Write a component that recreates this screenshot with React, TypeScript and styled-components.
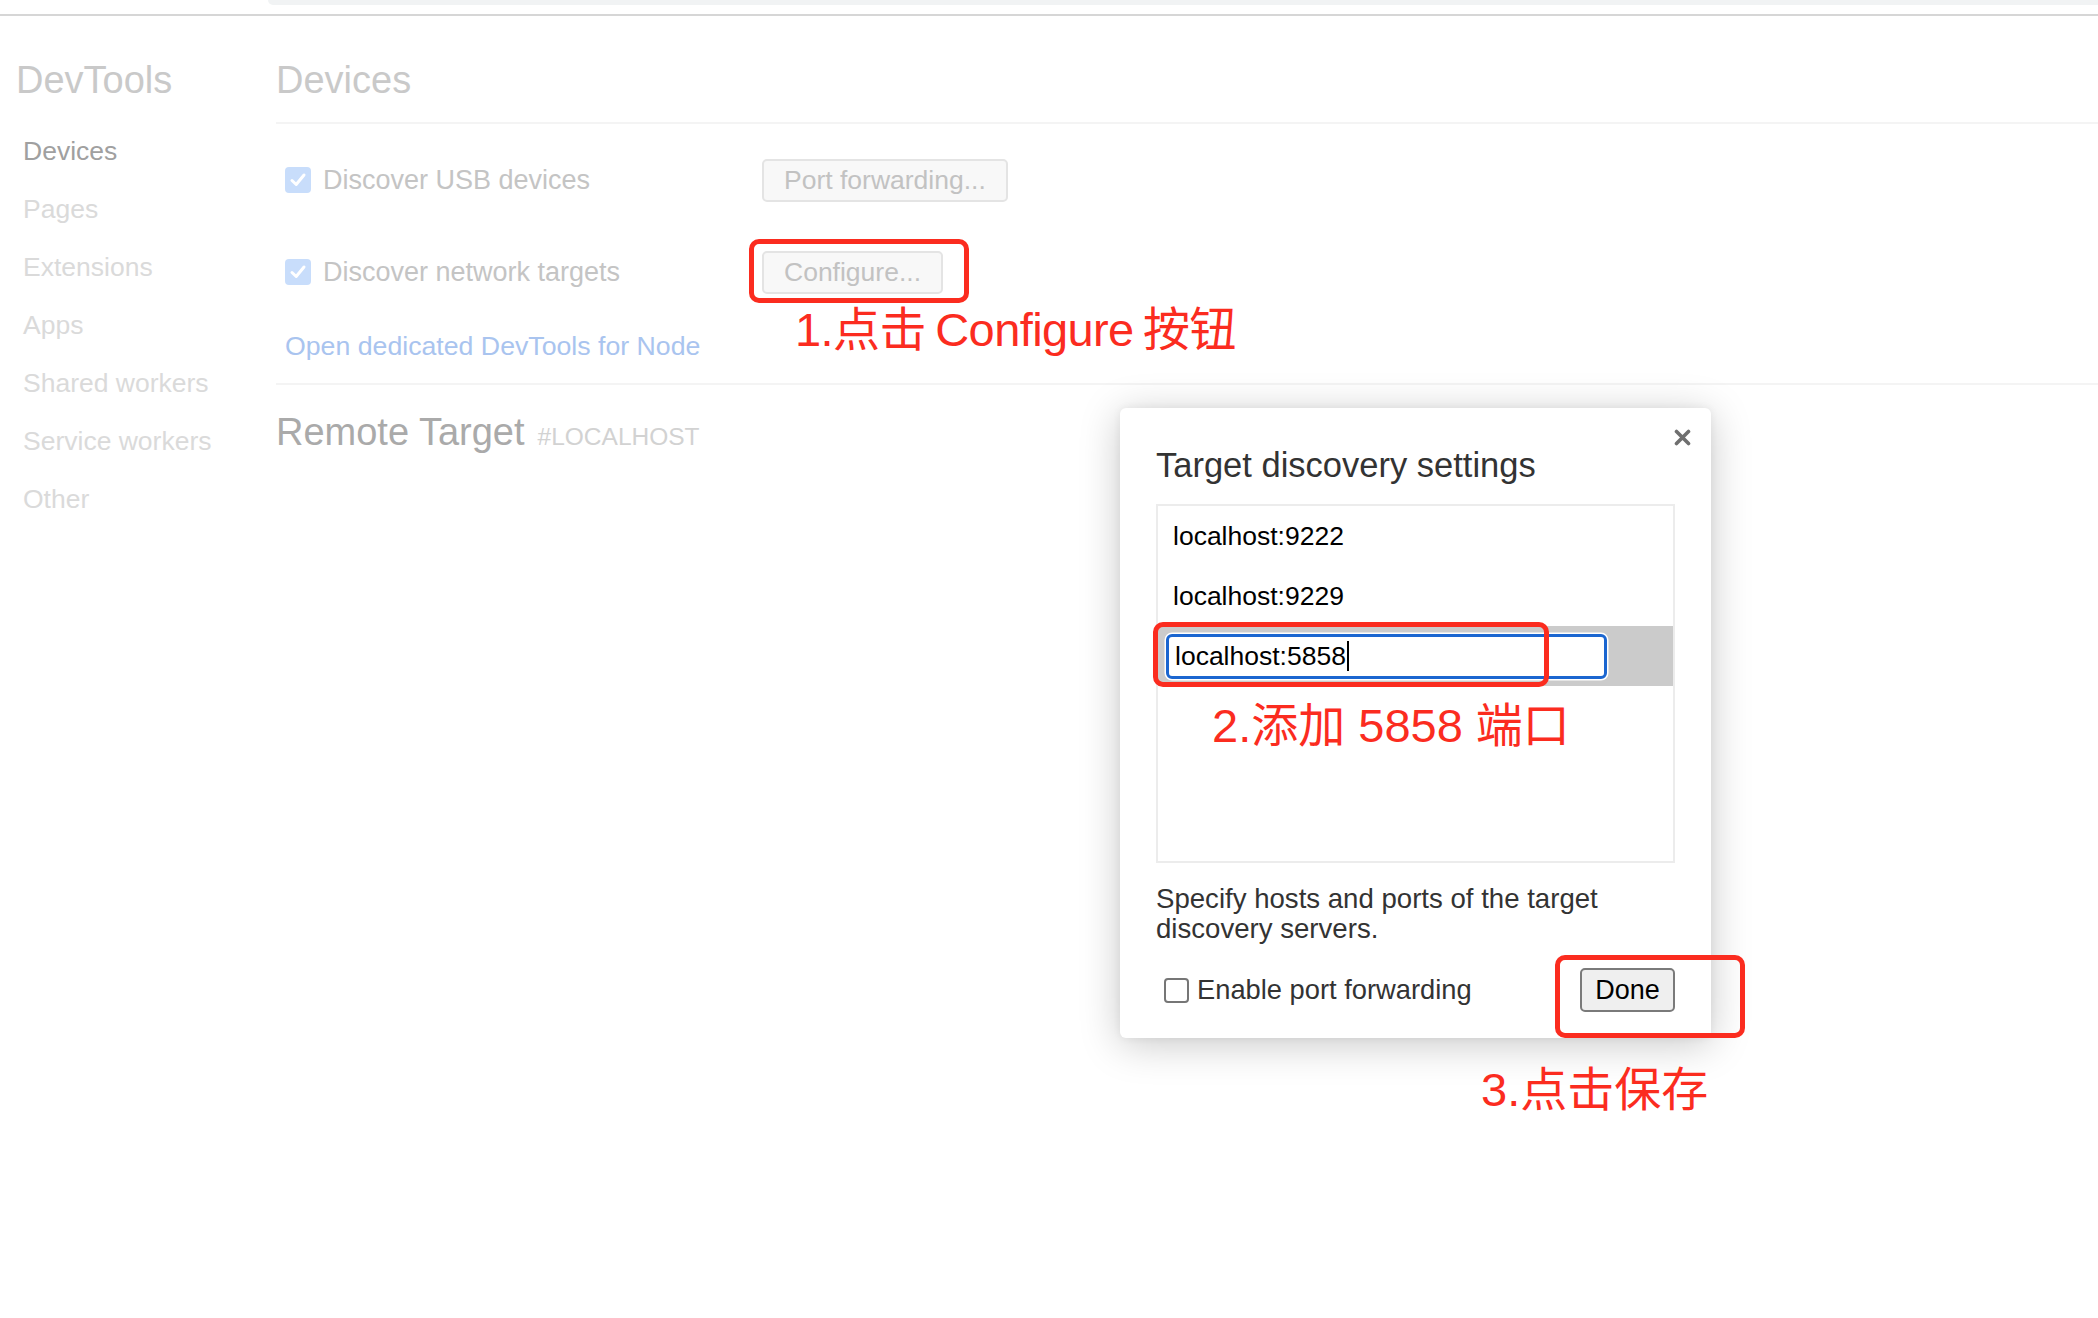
import React from "react";
import styled, { createGlobalStyle } from "styled-components";

const Global = createGlobalStyle`
  html, body { margin: 0; padding: 0; background: #ffffff; }
  body { font-family: "Liberation Sans", Arial, sans-serif; }
  * { box-sizing: border-box; }
`;

const Page = styled.div`
  position: relative;
  width: 2098px;
  height: 1318px;
  overflow: hidden;
  background: #ffffff;
`;

const TopStrip = styled.div`
  height: 16px;
  border-bottom: 2px solid #d6d6d6;
`;

const TabShelf = styled.div`
  margin-left: 268px;
  height: 5px;
  background: #f1f3f4;
  border-bottom-left-radius: 8px;
`;

const Layout = styled.div`
  display: flex;
`;

const Sidebar = styled.nav`
  width: 276px;
  flex: none;
`;

const SideTitle = styled.div`
  margin-top: 42px;
  padding-left: 16px;
  font-size: 38px;
  line-height: 44px;
  color: #c9c9c9;
`;

const NavList = styled.ul`
  list-style: none;
  margin: 20px 0 0;
  padding: 0 0 0 23px;
`;

const NavItem = styled.li<{ $active?: boolean }>`
  height: 58px;
  line-height: 58px;
  font-size: 26.5px;
  color: ${(p) => (p.$active ? "#a0a0a0" : "#dadada")};
`;

const Main = styled.main`
  flex: 1;
`;

const SectionHeader = styled.div`
  margin-top: 42px;
  padding-bottom: 20px;
  border-bottom: 2px solid #f4f4f4;
`;

const H1 = styled.h1`
  margin: 0;
  font-weight: normal;
  font-size: 38px;
  line-height: 44px;
  color: #c9c9c9;
`;

const Settings = styled.div`
  display: flex;
  flex-direction: column;
  padding: 34px 0 22px 9px;
  border-bottom: 2px solid #f4f4f4;
`;

const Row = styled.div<{ $gap?: number }>`
  display: flex;
  align-items: center;
  height: 44px;
  margin-top: ${(p) => p.$gap ?? 0}px;
`;

const CheckLabel = styled.label`
  display: flex;
  align-items: center;
  gap: 12px;
  width: 477px;
  font-size: 27px;
  color: #c4c4c4;
`;

const FadedBox = styled.span`
  width: 26px;
  height: 26px;
  border-radius: 4px;
  background: #c8ddfb;
  display: flex;
  align-items: center;
  justify-content: center;
  flex: none;
`;

const GhostButton = styled.button`
  height: 43px;
  padding: 0 20px;
  font-family: "Liberation Sans", Arial, sans-serif;
  font-size: 26.5px;
  color: #c2c2c2;
  background: #f8f8f8;
  border: 2px solid #e4e4e4;
  border-radius: 5px;
`;

const NodeLink = styled.a`
  margin-top: 37px;
  height: 30px;
  line-height: 30px;
  font-size: 26.7px;
  color: #a9c4ef;
  text-decoration: none;
`;

const RemoteHeading = styled.h2`
  margin: 25px 0 0;
  font-weight: normal;
  font-size: 38px;
  line-height: 44px;
  color: #aaaaaa;
`;

const HostTag = styled.span`
  margin-left: 13px;
  font-size: 24.5px;
  color: #d2d2d2;
  text-transform: uppercase;
`;

const Dialog = styled.div`
  position: absolute;
  left: 1120px;
  top: 408px;
  width: 591px;
  height: 630px;
  padding: 37px 36px 26px;
  background: #ffffff;
  border-radius: 6px;
  box-shadow: 0 6px 40px rgba(0, 0, 0, 0.22), 0 0 8px rgba(0, 0, 0, 0.06);
  display: flex;
  flex-direction: column;
`;

const CloseButton = styled.span`
  position: absolute;
  right: 20px;
  top: 21px;
  width: 17px;
  height: 17px;
  display: flex;
`;

const DialogTitle = styled.div`
  font-size: 34.5px;
  line-height: 40px;
  color: #333333;
`;

const HostList = styled.div`
  margin-top: 19px;
  height: 359px;
  border: 2px solid #ececec;
  display: flex;
  flex-direction: column;
`;

const HostRow = styled.div<{ $selected?: boolean }>`
  height: 60px;
  display: flex;
  align-items: center;
  padding-left: ${(p) => (p.$selected ? 8 : 15)}px;
  background: ${(p) => (p.$selected ? "#cbcbcb" : "transparent")};
  font-size: 26.5px;
  color: #000000;
`;

const HostInput = styled.div`
  width: 441px;
  height: 45px;
  border: 3px solid #1b66d0;
  border-radius: 6px;
  box-shadow: 0 0 0 1.5px #ffffff;
  background: #ffffff;
  padding-left: 6px;
  display: flex;
  align-items: center;
  font-size: 26.5px;
  color: #000000;
`;

const Caret = styled.span`
  display: inline-block;
  width: 2px;
  height: 30px;
  margin-left: 1px;
  background: #000000;
`;

const Description = styled.p`
  margin: 21px 0 0;
  font-size: 27.6px;
  line-height: 30px;
  color: #333333;
`;

const Footer = styled.div`
  margin-top: 24px;
  height: 44px;
  display: flex;
  align-items: center;
  justify-content: space-between;
  padding-left: 8px;
`;

const FooterCheck = styled.label`
  display: flex;
  align-items: center;
  gap: 8px;
  font-size: 27.3px;
  color: #333333;
`;

const EmptyBox = styled.span`
  width: 25px;
  height: 25px;
  border: 2px solid #767676;
  border-radius: 4px;
  background: #ffffff;
`;

const DoneButton = styled.button`
  width: 95px;
  height: 44px;
  font-family: "Liberation Sans", Arial, sans-serif;
  font-size: 27px;
  color: #000000;
  background: #efefef;
  border: 2px solid #7a7a7a;
  border-radius: 5px;
  padding: 0;
`;

const RedBox = styled.div<{ $x: number; $y: number; $w: number; $h: number }>`
  position: absolute;
  left: ${(p) => p.$x}px;
  top: ${(p) => p.$y}px;
  width: ${(p) => p.$w}px;
  height: ${(p) => p.$h}px;
  border: 5px solid #fb2c1f;
  border-radius: 10px;
  pointer-events: none;
`;

const Note = styled.div<{ $x: number; $y: number; $wordGap?: number; $tracking?: number }>`
  position: absolute;
  left: ${(p) => p.$x}px;
  top: ${(p) => p.$y}px;
  font-family: "Liberation Sans", "Noto Sans CJK SC", sans-serif;
  font-size: 47px;
  line-height: 52px;
  word-spacing: ${(p) => p.$wordGap ?? 0}px;
  letter-spacing: ${(p) => p.$tracking ?? 0}px;
  color: #fb2c1f;
  white-space: pre;
`;

const CheckMark = () => (
  <svg width="18" height="18" viewBox="0 0 18 18">
    <polyline points="3,9.5 7.2,13.5 15,4" fill="none" stroke="#ffffff" strokeWidth="3" strokeLinecap="round" strokeLinejoin="round" />
  </svg>
);

const CloseIcon = () => (
  <svg width="17" height="17" viewBox="0 0 17 17">
    <path d="M2.5 2.5 L14.5 14.5 M14.5 2.5 L2.5 14.5" stroke="#6f6f6f" strokeWidth="3.6" strokeLinecap="round" />
  </svg>
);

const navItems = ["Devices", "Pages", "Extensions", "Apps", "Shared workers", "Service workers", "Other"];

export default function App() {
  return (
    <Page>
      <Global />
      <TopStrip>
        <TabShelf />
      </TopStrip>
      <Layout>
        <Sidebar>
          <SideTitle>DevTools</SideTitle>
          <NavList>
            {navItems.map((n, i) => (
              <NavItem key={n} $active={i === 0}>
                {n}
              </NavItem>
            ))}
          </NavList>
        </Sidebar>
        <Main>
          <SectionHeader>
            <H1>Devices</H1>
          </SectionHeader>
          <Settings>
            <Row>
              <CheckLabel>
                <FadedBox>
                  <CheckMark />
                </FadedBox>
                Discover USB devices
              </CheckLabel>
              <GhostButton>Port forwarding...</GhostButton>
            </Row>
            <Row $gap={48}>
              <CheckLabel>
                <FadedBox>
                  <CheckMark />
                </FadedBox>
                Discover network targets
              </CheckLabel>
              <GhostButton>Configure...</GhostButton>
            </Row>
            <NodeLink href="#">Open dedicated DevTools for Node</NodeLink>
          </Settings>
          <RemoteHeading>
            Remote Target<HostTag>#localhost</HostTag>
          </RemoteHeading>
        </Main>
      </Layout>

      <Dialog>
        <CloseButton>
          <CloseIcon />
        </CloseButton>
        <DialogTitle>Target discovery settings</DialogTitle>
        <HostList>
          <HostRow>localhost:9222</HostRow>
          <HostRow>localhost:9229</HostRow>
          <HostRow $selected>
            <HostInput>
              localhost:5858
              <Caret />
            </HostInput>
          </HostRow>
        </HostList>
        <Description>Specify hosts and ports of the target discovery servers.</Description>
        <Footer>
          <FooterCheck>
            <EmptyBox />
            Enable port forwarding
          </FooterCheck>
          <DoneButton>Done</DoneButton>
        </Footer>
      </Dialog>

      <RedBox $x={749} $y={239} $w={220} $h={64} />
      <Note $x={795} $y={304} $wordGap={-3} $tracking={-0.6}>1.点击 Configure 按钮</Note>
      <RedBox $x={1153} $y={622} $w={396} $h={65} />
      <Note $x={1212} $y={700}>2.添加 5858 端口</Note>
      <RedBox $x={1555} $y={955} $w={190} $h={83} />
      <Note $x={1481} $y={1064}>3.点击保存</Note>
    </Page>
  );
}
